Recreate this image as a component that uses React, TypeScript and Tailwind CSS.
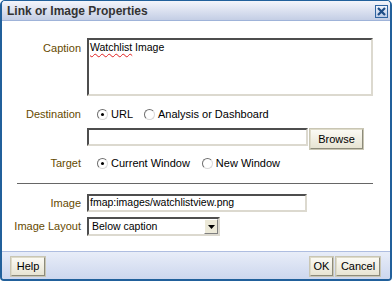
import React from 'react';

const font = { fontFamily: '"Liberation Sans", Arial, sans-serif' };

function Radio({ checked }: { checked?: boolean }) {
  return (
    <span className="relative inline-block w-[11px] h-[11px] rounded-full bg-white border border-t-[#6f6f6f] border-l-[#6f6f6f] border-r-[#d8d8d8] border-b-[#d8d8d8] shrink-0">
      {checked && <span className="absolute left-[3px] top-[3px] w-[3px] h-[3px] rounded-full bg-black" />}
    </span>
  );
}

function Button({ children, className = '' }: { children: React.ReactNode; className?: string }) {
  return (
    <button
      className={`h-[19px] flex items-center justify-center text-[11px] text-black bg-gradient-to-b from-[#fbfaf4] to-[#e7e4d3] border border-t-[#dedbc9] border-l-[#dedbc9] border-r-[#8d8b7b] border-b-[#8d8b7b] outline outline-1 outline-[#c9c6b4] ${className}`}
    >
      {children}
    </button>
  );
}

const label = 'w-[64px] shrink-0 flex justify-end whitespace-nowrap text-[11px] text-[#664a00]';
const sunken = 'bg-white border-2 border-t-[#4e4e4e] border-l-[#4e4e4e] border-r-[#dcd9cf] border-b-[#dcd9cf]';

export default function App() {
  return (
    <div className="w-[392px] h-[282px] bg-white" style={font}>
      <div className="w-[392px] h-[281px] flex flex-col border-x-2 border-t border-b-2 border-[#21609b] rounded-t-[5px] rounded-b-[4px] overflow-hidden">
        {/* Title bar */}
        <div className="h-[20px] shrink-0 flex items-center justify-between pl-[5px] pr-[2px] bg-gradient-to-b from-[#f3f5fb] to-[#c4cee5] border-b border-[#9fb3d9]">
          <span className="text-[12px] font-bold text-[#333333]">Link or Image Properties</span>
          <span className="w-[13px] h-[13px] mt-[1px] border border-[#2f64a0] bg-gradient-to-b from-[#f1f5fc] to-[#bccbe6] flex items-center justify-center">
            <svg width="9" height="9" viewBox="0 0 9 9">
              <path d="M1 1 L8 8 M8 1 L1 8" stroke="#1e4d86" strokeWidth="2.2" />
            </svg>
          </span>
        </div>

        {/* Body */}
        <div className="flex-1 bg-white pl-[15px] pr-[15px]">
          <div className="flex gap-[6px] mt-[17px]">
            <span className={`${label} pt-[2px]`}>Caption</span>
            <div className={`${sunken} w-[286px] h-[58px] px-[1px] text-[10.5px] text-black leading-[14px]`}>
              <span className="underline decoration-wavy decoration-[#e02020] decoration-[1px] underline-offset-2">Watchlist</span> Image
            </div>
          </div>

          <div className="flex items-center gap-[6px] mt-[11px] h-[14px]">
            <span className={label}>Destination</span>
            <div className="flex items-center text-[11px] text-black ml-[10px]">
              <Radio checked />
              <span className="ml-[3px]">URL</span>
              <span className="ml-[11px] flex items-center">
                <Radio />
              </span>
              <span className="ml-[3px]">Analysis or Dashboard</span>
            </div>
          </div>

          <div className="flex items-start gap-[6px] mt-[7px] h-[21px]">
            <span className={label}></span>
            <div className={`${sunken} w-[221px] h-[18px]`} />
            <Button className="w-[53px] h-[20px] mt-[1px] -ml-[4px]">Browse</Button>
          </div>

          <div className="flex items-center gap-[6px] mt-[7px] h-[14px]">
            <span className={label}>Target</span>
            <div className="flex items-center text-[11px] text-black ml-[10px]">
              <Radio checked />
              <span className="ml-[3px]">Current Window</span>
              <span className="ml-[12px] flex items-center">
                <Radio />
              </span>
              <span className="ml-[3px]">New Window</span>
            </div>
          </div>

          <div className="mt-[13px] border-t border-[#666666] h-[1px] w-[356px]" />

          <div className="flex items-center gap-[6px] mt-[10px]">
            <span className={label}>Image</span>
            <div className={`${sunken} w-[220px] h-[18px] px-[1px] flex items-center text-[10.5px] text-black`}>
              fmap:images/watchlistview.png
            </div>
          </div>

          <div className="flex items-center gap-[6px] mt-[5px]">
            <span className={label}>Image Layout</span>
            <div className={`${sunken} w-[133px] h-[19px] flex items-center justify-between text-[10.5px] text-black`}>
              <span className="pl-[3px]">Below caption</span>
              <span className="w-[14px] h-[15px] bg-[#ece9d8] border border-t-white border-l-white border-r-[#808080] border-b-[#808080] flex items-center justify-center">
                <svg width="7" height="4" viewBox="0 0 7 4">
                  <path d="M0 0 H7 L3.5 4 Z" fill="#000" />
                </svg>
              </span>
            </div>
          </div>
        </div>

        {/* Footer */}
        <div className="h-[28px] shrink-0 flex items-center justify-between pl-[9px] pr-[10px] pt-[1px] bg-gradient-to-b from-[#e8edf8] to-[#cdd7ee] border-t border-[#aebde0]">
          <Button className="w-[34px]">Help</Button>
          <div className="flex gap-[3px]">
            <Button className="w-[23px]">OK</Button>
            <Button className="w-[44px]">Cancel</Button>
          </div>
        </div>
      </div>
    </div>
  );
}
